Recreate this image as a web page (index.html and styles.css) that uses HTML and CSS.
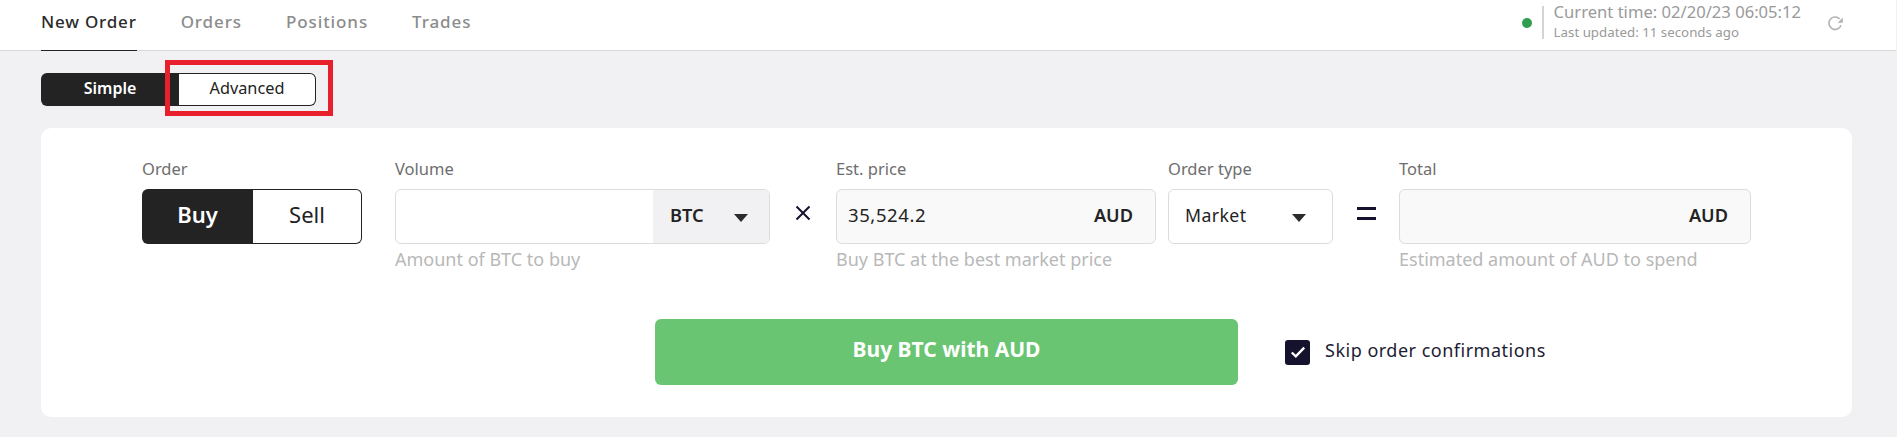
FILE: index.html
```html
<!DOCTYPE html>
<html lang="en">
<head>
<meta charset="utf-8">
<title>New Order</title>
<link rel="stylesheet" href="styles.css">
</head>
<body>
<header class="topbar">
  <nav class="tabs">
    <a class="tab tab-active">New Order</a>
    <a class="tab">Orders</a>
    <a class="tab">Positions</a>
    <a class="tab">Trades</a>
  </nav>
  <div class="status">
    <span class="dot"></span>
    <div class="clock">
      <div class="clock-now">Current time: 02/20/23 06:05:12</div>
      <div class="clock-updated">Last updated: 11 seconds ago</div>
    </div>
    <svg class="refresh" viewBox="0 0 16 16" width="16" height="16" fill="none" stroke="#b3b3b3" stroke-width="1.6">
      <path d="M14 10.2A6.2 6.2 0 1 1 12.6 3.9"/>
      <path d="M15.8 2.6v5.2h-5.2z" fill="#b3b3b3" stroke="none"/>
    </svg>
  </div>
</header>

<main class="content">
  <div class="mode">
    <div class="mode-simple">Simple</div>
    <div class="mode-advanced">Advanced</div>
    <div class="highlight"></div>
  </div>

  <section class="card">
    <div class="fields">
      <div class="field field-order">
        <div class="label">Order</div>
        <div class="side">
          <div class="side-buy">Buy</div>
          <div class="side-sell">Sell</div>
        </div>
      </div>
      <div class="field field-volume">
        <div class="label">Volume</div>
        <div class="box">
          <div class="box-main"></div>
          <div class="unit-select"><span class="strong">BTC</span><span class="caret"></span></div>
        </div>
        <div class="help">Amount of BTC to buy</div>
      </div>
      <div class="operator">
        <svg viewBox="0 0 16 16" width="16" height="16" fill="none" stroke="#15122e" stroke-width="2"><path d="M1.5 1.5l13 13M14.5 1.5l-13 13"/></svg>
      </div>
      <div class="field field-price">
        <div class="label">Est. price</div>
        <div class="box box-muted">
          <span class="value">35,524.2</span><span class="strong">AUD</span>
        </div>
        <div class="help">Buy BTC at the best market price</div>
      </div>
      <div class="field field-type">
        <div class="label">Order type</div>
        <div class="box box-type">
          <span class="value value-type">Market</span><span class="caret"></span>
        </div>
      </div>
      <div class="operator operator-eq">
        <svg viewBox="0 0 19 13" width="19" height="13" fill="#15122e"><rect width="19" height="3"/><rect y="10" width="19" height="3"/></svg>
      </div>
      <div class="field field-total">
        <div class="label">Total</div>
        <div class="box box-muted box-end">
          <span class="strong">AUD</span>
        </div>
        <div class="help">Estimated amount of AUD to spend</div>
      </div>
    </div>
    <div class="actions">
      <button class="submit" type="button">Buy BTC with AUD</button>
      <label class="skip">
        <span class="check">
          <svg viewBox="0 0 16 16" width="16" height="16" fill="none" stroke="#fff" stroke-width="2.4"><path d="M1.8 8.5l4 3.8L14.2 3.6"/></svg>
        </span>
        <span class="skip-text">Skip order confirmations</span>
      </label>
    </div>
  </section>
</main>
</body>
</html>
```
FILE: styles.css
```css
* { box-sizing: border-box; }
html, body { margin: 0; padding: 0; }
body {
  background: #f1f1f4;
  font-family: "Noto Sans", "Liberation Sans", sans-serif;
  color: #222;
  height: 437px;
  overflow: hidden;
}
.topbar {
  display: flex;
  justify-content: space-between;
  height: 51px;
  margin-right: 1px;
  padding: 0 53px 0 41px;
  background: #fff;
  border-bottom: 1px solid #d8d8d8;
}
.tabs { display: flex; gap: 44px; height: 51px; }
.tab {
  display: block;
  height: 51px;
  padding-top: 9px;
  font-size: 17px;
  line-height: 25px;
  letter-spacing: 0.9px;
  font-weight: 500;
  color: #8c8c8c;
}
.tab-active { color: #2b2b2b; border-bottom: 1px solid #222; letter-spacing: 0.8px; }
.status { display: flex; align-items: flex-start; }
.dot {
  width: 10px; height: 10px;
  margin-top: 18px;
  border-radius: 50%;
  background: #2f9e4f;
}
.clock {
  height: 33px;
  margin: 6px 0 0 10px;
  padding-left: 10px;
  border-left: 2px solid #d4d4d4;
  color: #9a9a9a;
}
.clock-now { font-size: 16.6px; line-height: 11px; height: 15px; }
.clock-updated { font-size: 13.3px; line-height: 20px; margin-top: 1px; }
.refresh { margin: 15px 0 0 26px; }

.content { padding: 22px 45px 0 41px; }
.mode { position: relative; display: flex; width: 275px; height: 33px; }
.mode-simple {
  width: 138px;
  background: #232323;
  color: #fff;
  border-radius: 6px 0 0 6px;
  font-size: 16px;
  font-weight: 600;
  line-height: 31px;
  text-align: center;
}
.mode-advanced {
  width: 137px;
  background: #fff;
  border: 1px solid #232323;
  border-left: 0;
  border-radius: 0 6px 6px 0;
  font-size: 16.3px;
  line-height: 29px;
  text-align: center;
}
.highlight {
  position: absolute;
  left: 124px; top: -13px;
  width: 168px; height: 56px;
  border: 5px solid #e8202c;
}
.card {
  margin-top: 22px;
  height: 289px;
  padding: 32px 0 0 101px;
  background: #fff;
  border-radius: 10px;
}
.fields { display: flex; align-items: flex-start; }
.label { font-size: 16.5px; line-height: 18px; color: #6e6e6e; margin-bottom: 11px; }
.help { font-size: 18px; line-height: 20px; margin-top: 5px; color: #b8b8b8; white-space: nowrap; }
.field-order { width: 220px; margin-right: 33px; }
.field-volume { width: 375px; }
.field-price { width: 320px; margin-right: 12px; }
.field-type { width: 165px; }
.field-total { width: 352px; }
.operator {
  display: flex;
  align-items: center;
  justify-content: center;
  width: 66px;
  height: 48px;
  margin-top: 29px;
}
.side {
  display: flex;
  height: 55px;
  font-size: 22px;
  text-align: center;
}
.side-buy {
  width: 111px;
  background: #232323;
  color: #fff;
  border-radius: 6px 0 0 6px;
  font-weight: 600;
  line-height: 50px;
}
.side-sell {
  width: 109px;
  border: 1px solid #232323;
  border-left: 0;
  border-radius: 0 6px 6px 0;
  line-height: 48px;
}
.box {
  display: flex;
  align-items: center;
  justify-content: space-between;
  height: 55px;
  padding: 0 22px 4px 16px;
  border: 1px solid #dcdcdc;
  border-radius: 6px;
  overflow: hidden;
}
.field-volume .box { padding: 0; }
.box-muted { background: #f9f9f9; padding-left: 11px; }
.box-type { padding-right: 26px; }
.box-end { justify-content: flex-end; }
.box-main { flex: 1; }
.unit-select {
  display: flex;
  align-items: center;
  justify-content: space-between;
  width: 116px;
  height: 100%;
  padding: 0 21px 4px 17px;
  background: #f1f1f4;
}
.strong { font-size: 18.2px; font-weight: 600; color: #232323; }
.value { font-size: 18.5px; letter-spacing: 0.6px; color: #232323; }
.value-type { font-size: 17.7px; letter-spacing: 0.4px; }
.caret {
  width: 0; height: 0;
  margin-top: 6px;
  border-left: 7px solid transparent;
  border-right: 7px solid transparent;
  border-top: 8px solid #2b2b2b;
}
.actions { display: flex; align-items: center; margin: 50px 0 0 513px; }
.submit {
  width: 583px;
  height: 66px;
  padding: 0 0 7px;
  background: #69c572;
  color: #fff;
  border: 0;
  border-radius: 6px;
  font-family: inherit;
  font-size: 21px;
  font-weight: 700;
}
.skip { display: flex; align-items: flex-start; margin-left: 47px; }
.check {
  display: flex;
  align-items: center;
  justify-content: center;
  width: 25px;
  height: 25px;
  background: #15122e;
  border-radius: 3px;
}
.skip-text {
  margin-left: 15px;
  font-size: 18px;
  line-height: 20px;
  letter-spacing: 0.5px;
  color: #1d1b33;
}
```
